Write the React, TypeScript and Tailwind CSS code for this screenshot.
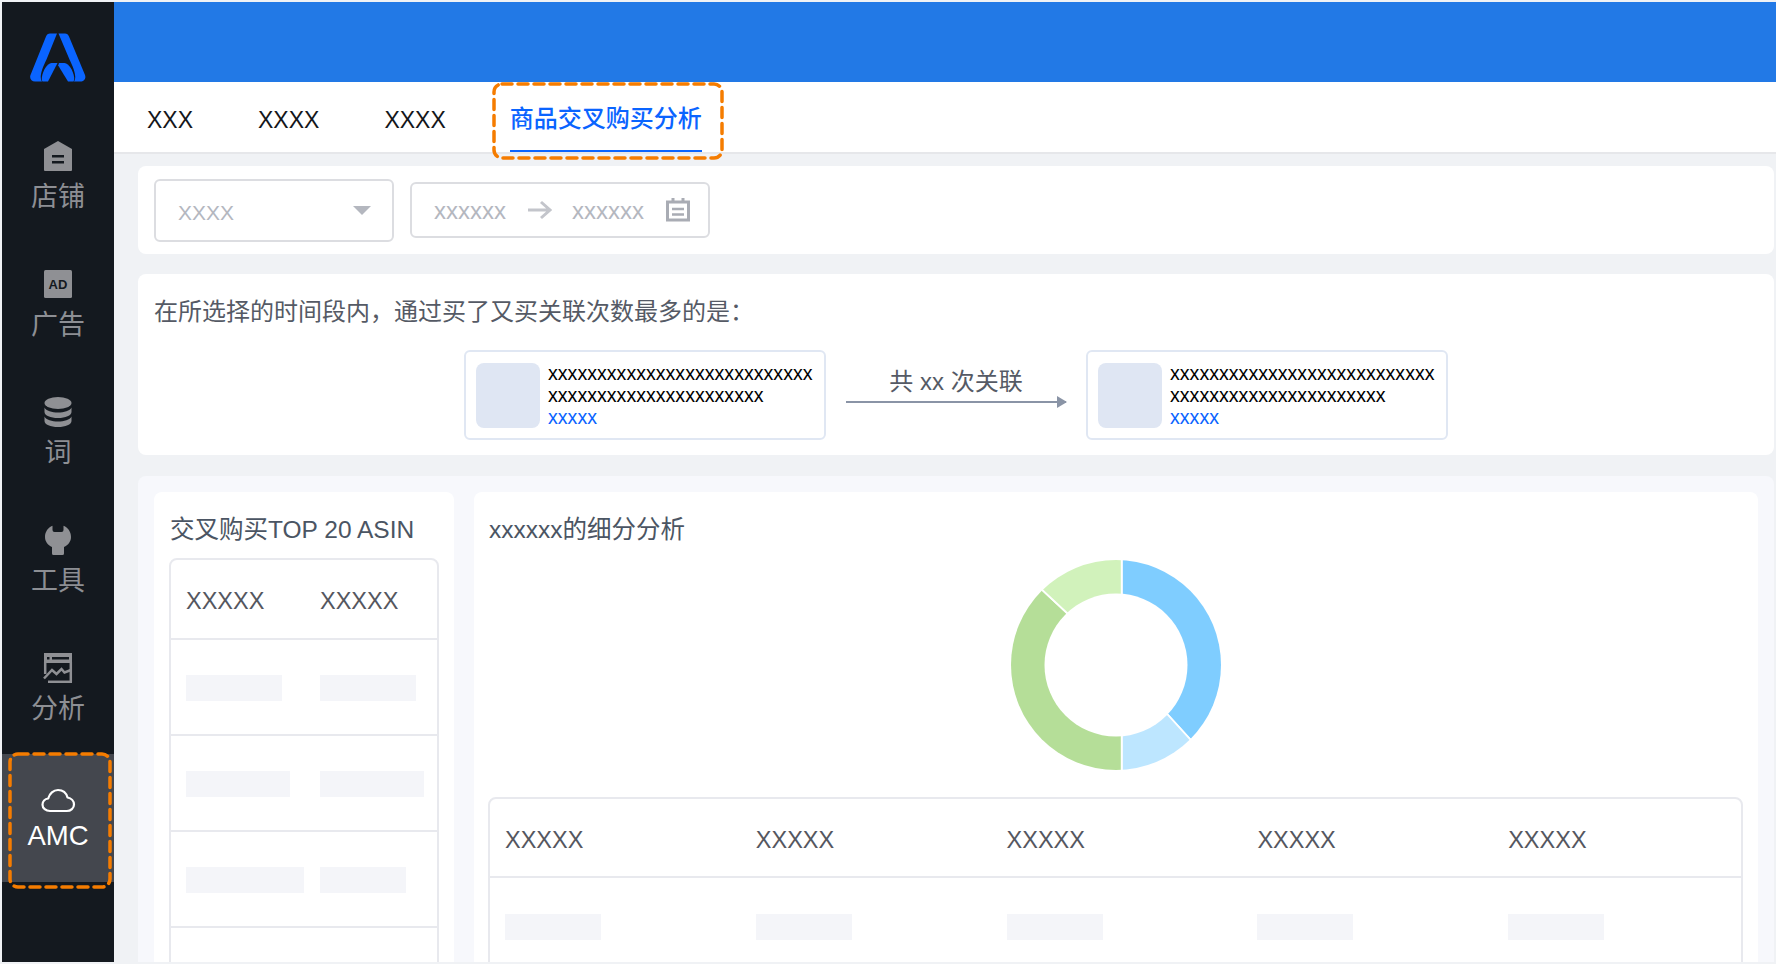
const font = "font-['Liberation_Sans','Noto_Sans_CJK_SC',sans-serif]";

const ShopIcon = () => (
  <svg width="30" height="30" viewBox="0 0 30 30">
    <path d="M15 0 29 8v21a1 1 0 0 1-1 1H2a1 1 0 0 1-1-1V8z" fill="#8f9094" />
    <path d="M9 14h12v2.5H9zM9 20h12v2.5H9z" fill="#14191f" />
  </svg>
);

const AdIcon = () => (
  <svg width="30" height="30" viewBox="0 0 30 30">
    <rect x="1" y="1" width="28" height="28" rx="1.5" fill="#8f9094" />
    <text x="15" y="20" textAnchor="middle" fontSize="13" fontWeight="700" fontFamily="Liberation Sans" fill="#14191f">AD</text>
  </svg>
);

const DbIcon = () => (
  <svg width="30" height="30" viewBox="0 0 30 30">
    <ellipse cx="15" cy="6" rx="13.5" ry="6" fill="#8f9094" />
    <path d="M1.5 10.5C3 14 9 15.5 15 15.5S27 14 28.5 10.5V15c0 3.5-6 6-13.5 6S1.5 18.5 1.5 15z" fill="#8f9094" />
    <path d="M1.5 19.5C3 23 9 24.5 15 24.5S27 23 28.5 19.5V24c0 3.5-6 6-13.5 6S1.5 27.5 1.5 24z" fill="#8f9094" />
  </svg>
);

const ToolIcon = () => (
  <svg width="30" height="30" viewBox="0 0 30 30">
    <path d="M9.5 .8V5a2 2 0 0 0 2 2h7a2 2 0 0 0 2-2V.8C25 2.5 28 7 28 12c0 4.5-2.8 8-7 10v6.5a1.5 1.5 0 0 1-1.5 1.5h-9A1.5 1.5 0 0 1 9 28.5V22C4.8 20 2 16.5 2 12 2 7 5 2.5 9.5 .8z" fill="#8f9094" />
  </svg>
);

const ChartIcon = () => (
  <svg width="30" height="30" viewBox="0 0 30 30" fill="none" stroke="#8f9094" strokeWidth="2.5">
    <path d="M1 0h28v10H1z" fill="#8f9094" stroke="none" />
    <rect x="4" y="4" width="2.5" height="2.5" fill="#14191f" stroke="none" />
    <rect x="9" y="4" width="17" height="2.5" fill="#14191f" stroke="none" />
    <path d="M2.2 9v12M27.8 9v20" />
    <path d="M1 25.5 9 17l4.5 4 5-5 3 3.5 6.5-2.5" />
    <path d="M5 28.8h24" />
  </svg>
);

const CloudIcon = () => (
  <svg width="34" height="30" viewBox="0 0 34 30" fill="none" stroke="#ffffff" strokeWidth="2.2" strokeLinejoin="round" className="overflow-visible">
    <path d="M9 30c-4.2 0-7.5-2.8-7.5-6.3 0-3.2 2.5-5.7 5.7-6.2C8.5 12.5 12.5 9 17 9c4.7 0 8.3 3 9.5 7.5 3.8.7 6.5 3.7 6.5 7 0 3.6-3.2 6.5-7.2 6.5z" />
  </svg>
);

const DashedBox = ({ w, h }: { w: number; h: number }) => (
  <svg width={w} height={h} className="block">
    <rect x="2" y="2" width={w - 4} height={h - 4} rx="8" fill="none" stroke="#f57c00" strokeWidth="3.5" strokeDasharray="10 6" strokeLinecap="round" />
  </svg>
);

const navItems = [
  { label: '店铺', icon: ShopIcon },
  { label: '广告', icon: AdIcon },
  { label: '词', icon: DbIcon },
  { label: '工具', icon: ToolIcon },
  { label: '分析', icon: ChartIcon },
];

const Sidebar = () => (
  <aside className="w-[112px] shrink-0 bg-[#14191f] flex flex-col">
    <div className="h-[112px] flex items-start justify-center pt-[31px]">
      {/* legs and inner arch of the A */}
      <svg width="56" height="49" viewBox="0 0 56 48" fill="#0a64ff">
        <path d="M20 0h7L16.5 26C13 33 10.5 40 10.8 44c.1 2 .6 3 1.2 4H5c-3.5 0-5.8-3-4.5-6.5L16 3c.8-2 2-3 4-3z" />
        <path d="M28.5 0H35c2 0 3.2 1 4 3l16 38.5c1.3 3.5-1 6.5-4.5 6.5H44c.6-1 1.1-2 1.2-4 .3-4-2.2-11-5.7-18z" />
        <path d="M12.5 48c-.7-1-.9-2.500-.6-4.500C13 37 17 30 21.500 29.500H27.500L18 48z" />
        <path d="M29 29.500H34.500c4.500.5 8.500 7.500 9.600 14 .3 2-.1 3.500-.6 4.500H38L28.200 32z" />
      </svg>
    </div>
    {navItems.map((item) => (
      <div key={item.label} className="h-[128px] flex flex-col items-center pt-[27px]">
        <item.icon />
        <span className={`mt-[9px] text-[27px] leading-[34px] text-[#8d8f94] ${font}`}>{item.label}</span>
      </div>
    ))}
    <div className="relative h-[128px] bg-[#44474e] flex flex-col items-center pt-[27px]">
      <CloudIcon />
      <span className={`mt-[8px] text-[27.5px] leading-[34px] text-white ${font}`}>AMC</span>
      <div className="absolute left-[6px] top-[-2px]">
        <DashedBox w={104} h={137} />
      </div>
    </div>
  </aside>
);

const Tabs = () => (
  <div className={`h-[72px] shrink-0 bg-white border-b-2 border-[#e6e7ea] flex gap-[65px] pl-[33px] ${font}`}>
    {['XXX', 'XXXX', 'XXXX'].map((t, i) => (
      <div key={i} className="h-[70px] flex items-center pt-[6px] text-[23px] text-[#14161a]">{t}</div>
    ))}
    <div className="relative h-[70px] ml-[-1px] flex items-center pt-[5px] border-b-2 border-[#0a64ff] text-[24px] font-medium text-[#0a64ff]">
      商品交叉购买分析
      <div className="absolute left-[-18px] top-0">
        <DashedBox w={232} h={78} />
      </div>
    </div>
  </div>
);

const FilterCard = () => (
  <div className={`h-[88px] rounded-[8px] bg-white flex items-center gap-[16px] pl-[16px] ${font}`}>
    <div className="w-[240px] h-[63px] rounded-[6px] border-2 border-[#dcdde1] flex items-center justify-between pl-[22px] pr-[21px]">
      <span className="text-[21px] pt-[5px] text-[#b4b7bf]">XXXX</span>
      <span className="w-0 h-0 border-x-[9px] border-t-[9px] border-x-transparent border-t-[#b4b7bf]" />
    </div>
    <div className="w-[300px] h-[56px] rounded-[6px] border-2 border-[#dcdde1] flex items-center pl-[22px] text-[#b4b7bf]">
      <span className="text-[24px] leading-[28px] pt-[1px]">xxxxxx</span>
      <svg className="ml-[22px]" width="24" height="20" viewBox="0 0 24 20" fill="none" stroke="#c3c5cb" strokeWidth="3">
        <path d="M0 10h22M13 2l9 8-9 8" />
      </svg>
      <span className="ml-[20px] text-[24px] leading-[28px] pt-[1px]">xxxxxx</span>
      <svg className="ml-[22px]" width="24" height="24" viewBox="0 0 24 24" fill="none" stroke="#a9acb4" strokeWidth="3">
        <rect x="1.5" y="4" width="21" height="18" />
        <path d="M7 0v5M17 0v5" />
        <path d="M6 11h12M6 16.5h12" strokeWidth="2.5" />
      </svg>
    </div>
  </div>
);

const Product = () => (
  <div className="w-[362px] h-[90px] rounded-[6px] border-2 border-[#e0e7f3] bg-white flex items-center pl-[10px] gap-[8px]">
    <div className="w-[64px] h-[65px] rounded-[8px] bg-[#dfe6f3] shrink-0" />
    <div className="text-[19.6px] leading-[22px] text-black">
      <div>xxxxxxxxxxxxxxxxxxxxxxxxxxx</div>
      <div>xxxxxxxxxxxxxxxxxxxxxx</div>
      <div className="text-[#0a64ff]">xxxxx</div>
    </div>
  </div>
);

const SummaryCard = () => (
  <div className={`h-[181px] rounded-[8px] bg-white pl-[16px] pt-[24px] ${font}`}>
    <div className="text-[24px] leading-[28px] text-[#555a65]">在所选择的时间段内，通过买了又买关联次数最多的是：</div>
    <div className="flex items-center mt-[24px] ml-[310px]">
      <Product />
      <div className="w-[220px] mx-[20px] mb-[22px] flex flex-col items-center">
        <span className="text-[24px] leading-[32px] text-[#555a65]">共 xx 次关联</span>
        <div className="relative w-full mt-[3px] h-[2px] bg-[#8a94a6]">
          <span className="absolute right-[-1px] top-[-5px] w-0 h-0 border-y-[6px] border-l-[10px] border-y-transparent border-l-[#8a94a6]" />
        </div>
      </div>
      <Product />
    </div>
  </div>
);

const Skeleton = ({ w }: { w: number }) => <div className="h-[26px] bg-[#f4f5f9]" style={{ width: w }} />;

const leftRows = [
  [96, 96],
  [104, 104],
  [118, 86],
];

const LeftPanel = () => (
  <div className="w-[300px] shrink-0 rounded-t-[8px] bg-white pt-[22px] pl-[16px] h-[520px]">
    <div className="text-[24.5px] leading-[32px] text-[#4b5563]">交叉购买TOP 20 ASIN</div>
    <div className="w-[270px] mt-[12px] ml-[-1px] rounded-t-[8px] border-2 border-[#e8e9ee]">
      <div className="h-[80px] flex items-center pt-[6px] text-[23.5px] text-[#55575f] border-b-2 border-[#e8e9ee] pl-[15px]">
        <span className="w-[134px]">XXXXX</span>
        <span>XXXXX</span>
      </div>
      {leftRows.map((r, i) => (
        <div key={i} className="h-[96px] flex items-center pt-[1px] border-b-2 border-[#e8e9ee] pl-[15px]">
          <div className="w-[134px]"><Skeleton w={r[0]} /></div>
          <Skeleton w={r[1]} />
        </div>
      ))}
      <div className="h-[60px]" />
    </div>
  </div>
);

// the slices share a centre a few px off the ring's own centre
const Donut = () => (
  <svg width="214" height="214" viewBox="-107 -107 214 214">
    <mask id="ring">
      <circle r="105" fill="#fff" />
      <circle r="71.5" fill="#000" />
    </mask>
    <g mask="url(#ring)" stroke="#fff" strokeWidth="1.8">
      <polygon points="5.7,-1 5.7,-130 130,-130 130,135.7" fill="#7fcdff" />
      <polygon points="5.7,-1 130,135.7 5.7,135.7" fill="#bde6ff" />
      <polygon points="5.7,-1 5.7,135.7 -130,135.7 -130,-127.4" fill="#b5de98" />
      <polygon points="5.7,-1 -130,-127.4 -130,-130 5.7,-130" fill="#d1f2bb" />
    </g>
  </svg>
);

const RightPanel = () => (
  <div className="flex-1 min-w-0 rounded-t-[8px] bg-white pt-[22px] pl-[15px] pr-[15px] h-[520px]">
    <div className="text-[24.5px] leading-[32px] text-[#4b5563]">xxxxxx的细分分析</div>
    <div className="flex justify-center pt-[12px] h-[251px]">
      <Donut />
    </div>
    <div className="ml-[-1px] rounded-t-[8px] border-2 border-[#e8e9ee] h-[240px]">
      <div className="h-[79px] grid grid-cols-[repeat(5,250.8px)] items-center pt-[6px] text-[23.5px] text-[#55575f] border-b-2 border-[#e8e9ee] pl-[15px]">
        {[0, 1, 2, 3, 4].map((i) => <span key={i}>XXXXX</span>)}
      </div>
      <div className="h-[96px] grid grid-cols-[repeat(5,250.8px)] items-center pt-[1px] pl-[15px]">
        {[0, 1, 2, 3, 4].map((i) => <Skeleton key={i} w={96} />)}
      </div>
    </div>
  </div>
);

export default function App() {
  return (
    <div className={`w-[1776px] h-[964px] bg-[#f0f2f5] overflow-hidden flex pl-[2px] py-[2px] ${font}`}>
      <Sidebar />
      <main className="flex-1 min-w-0 flex flex-col overflow-hidden">
        <div className="h-[80px] shrink-0 bg-[#2279e6]" />
        <Tabs />
        <div className="pl-[24px] pr-[2px] pt-[12px] flex flex-col flex-1 min-h-0">
          <FilterCard />
          <div className="h-[20px] shrink-0" />
          <SummaryCard />
          <div className="h-[21px] shrink-0" />
          <div className="flex-1 min-h-0 overflow-hidden rounded-t-[8px] bg-[#f7f8fc] pt-[16px] px-[16px] flex gap-[20px]">
            <LeftPanel />
            <RightPanel />
          </div>
        </div>
      </main>
    </div>
  );
}
